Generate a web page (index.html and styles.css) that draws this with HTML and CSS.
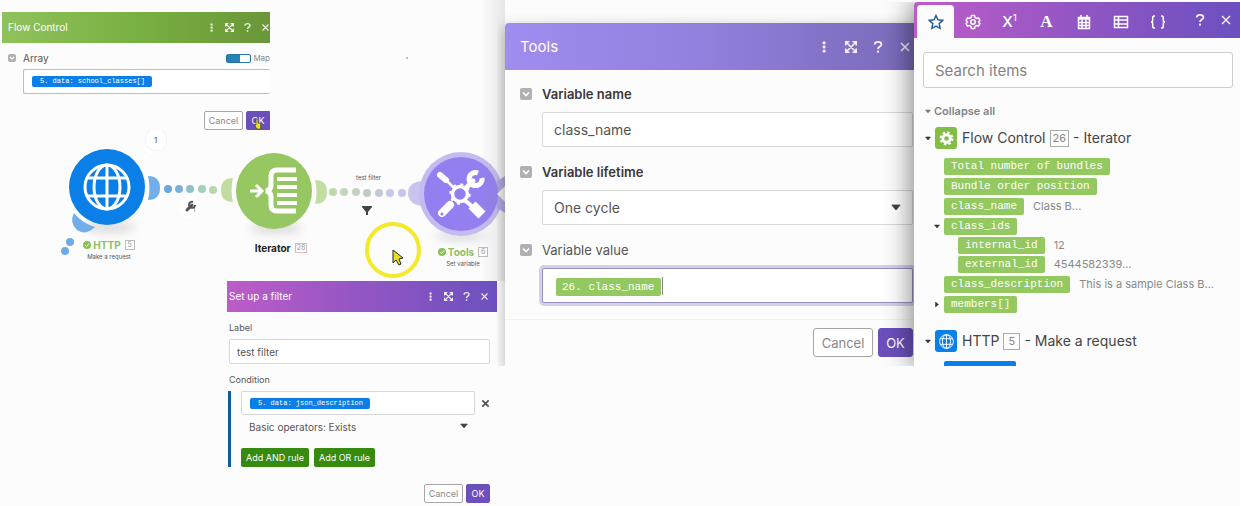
FILE: index.html
```html
<!DOCTYPE html>
<html lang="en">
<head>
<meta charset="utf-8">
<title>Scenario editor</title>
<link rel="stylesheet" href="styles.css">
</head>
<body>
<svg class="defs" aria-hidden="true">
  <symbol id="dots" viewBox="0 0 12 12"><g fill="currentColor"><rect x="4.7" y="0.5" width="2.8" height="2.8" rx=".8"/><rect x="4.7" y="4.6" width="2.8" height="2.8" rx=".8"/><rect x="4.7" y="8.7" width="2.8" height="2.8" rx=".8"/></g></symbol>
  <symbol id="expand" viewBox="0 0 12 12"><path d="M.8 4.500V.8h3.700M7.500.8h3.700v3.700M11.200 7.500v3.700H7.500M4.500 11.200H.8V7.500M1.500 1.500l9 9M10.500 1.500l-9 9" fill="none" stroke="currentColor" stroke-width="1.600"/></symbol>
  <symbol id="help" viewBox="0 0 12 12"><path d="M2.600 3.500C2.800 1.600 4.300.900 6 .900c1.900 0 3.400 1 3.400 2.500C9.400 5.600 6 5.500 6 8" fill="none" stroke="currentColor" stroke-width="1.800"/><rect x="5" y="9.600" width="2" height="2" fill="currentColor"/></symbol>
  <symbol id="close" viewBox="0 0 12 12"><path d="M2 2l8 8M10 2l-8 8" fill="none" stroke="currentColor" stroke-width="1.500"/></symbol>
  <symbol id="chev" viewBox="0 0 12 12"><path d="M3 4.500l3 3 3-3" fill="none" stroke="#fff" stroke-width="1.600"/></symbol>
  <symbol id="caret" viewBox="0 0 12 8"><path d="M1 1h10L6 7z" fill="currentColor" stroke="currentColor" stroke-linejoin="round"/></symbol>
  <symbol id="globe" viewBox="0 0 48 48"><g fill="none" stroke="#fff" stroke-width="3"><circle cx="24" cy="24" r="22"/><ellipse cx="24" cy="24" rx="13" ry="22"/><path d="M24 2v44M5 15h38M5 33h38"/></g></symbol>
</svg>

<main class="board">
  <section class="flow" aria-label="Scenario">
    <svg class="flow-art" width="505" height="281" viewBox="0 0 505 281" aria-hidden="true">
      <defs>
        <linearGradient id="shade" x1="0" x2="1"><stop offset="0" stop-color="#777" stop-opacity="0"/><stop offset="1" stop-color="#777" stop-opacity=".16"/></linearGradient>
        <filter id="soft" x="-30%" y="-100%" width="160%" height="300%"><feGaussianBlur stdDeviation="5"/></filter>
      </defs>
      <g fill="#999" opacity=".32" filter="url(#soft)"><ellipse cx="109" cy="227" rx="26" ry="6"/><ellipse cx="276" cy="228" rx="26" ry="6"/><ellipse cx="461" cy="236" rx="26" ry="5"/></g>
      <path d="M74 213q-5 10 3 17 9 6 18-3-13-4-21-14z" fill="#72aeea"/>
      <g fill="#6fabe4"><circle cx="70" cy="242" r="4"/><circle cx="65" cy="251" r="4"/></g>
      <path d="M148 176q12 0 12 12t-12 12q3-12 0-24z" fill="#72aeea"/>
      <g><circle cx="168" cy="189" r="4" fill="#69a8dd"/><circle cx="179" cy="189" r="4" fill="#7cb0da"/><circle cx="190" cy="189" r="4" fill="#8fc1cb"/><circle cx="202" cy="189" r="4" fill="#a4cfbd"/><circle cx="213" cy="190" r="4" fill="#b5d8ad"/></g>
      <path d="M233 178q-12 0-12 12t12 12q-3-12 0-24z" fill="#c1dda2"/>
      <path d="M315 180q12 0 12 12t-12 12q3-12 0-24z" fill="#c1dda2"/>
      <g><circle cx="333" cy="192" r="4" fill="#bddaa9"/><circle cx="344" cy="192" r="4" fill="#c1d8ba"/><circle cx="356" cy="192" r="4" fill="#c2d2c3"/><circle cx="367" cy="193" r="4" fill="#c0cbc5"/><circle cx="379" cy="193" r="4" fill="#c1cbd7"/><circle cx="390" cy="193" r="4" fill="#c3c9e6"/><circle cx="402" cy="193" r="4" fill="#c6c6eb"/></g>
      <path d="M424 181c-12 0-16 6-16 12s4 13 16 13z" fill="#c9c4ef"/>
      <circle cx="107" cy="187" r="38" fill="#0b7fe8"/>
      <use href="#globe" x="83" y="163" width="48" height="48"/>
      <circle cx="274" cy="191" r="38" fill="#97c763"/>
      <g fill="none" stroke="#fff"><path d="M250 191h10M256 185l6 6-6 6" stroke-width="3"/><path d="M296 170h-19q-6 0-6 6v9q0 5-5 6 5 1 5 6v8q0 6 6 6h19" stroke-width="5"/><path d="M277 179h20M277 187h20M277 195h20M277 203h20" stroke-width="4"/></g>
      <circle cx="461" cy="194" r="42" fill="#c4bbf1"/>
      <path d="M496 182l9-6v37l-9-6z" fill="#b6a9ef"/>
      <circle cx="461" cy="194" r="37" fill="#957ff0"/>
      <path d="M497 194l8-8v16z" fill="#fff"/>
      <g stroke="#fff" fill="none" stroke-linecap="round">
        <circle cx="460" cy="194" r="7.500" stroke-width="3.500"/><circle cx="460" cy="194" r="9.800" stroke-width="1.800" stroke-dasharray="3 4.700" stroke-linecap="butt"/>
        <path d="M440 175l6 5" stroke-width="6"/><path d="M446 180l7 7" stroke-width="2.500"/>
        <path d="M442 213l8-8" stroke-width="8"/><path d="M472 205l10 10" stroke-width="10" stroke-linecap="butt"/><path d="M467 202l8 7" stroke-width="4"/>
        <path d="M467 187l6-6" stroke-width="5"/><path d="M478 173a6.500 6.500 0 1 0 4 5" stroke-width="5" stroke-linecap="butt"/>
      </g>
      <circle cx="442" cy="214" r="1.500" fill="#957ff0"/>
      <path d="M147 148q-1 7-6 13 8-4 15-9z" fill="#fff"/><circle cx="156" cy="140" r="11" fill="#fff" stroke="#f3f3f3"/>
      <circle cx="190" cy="207" r="11" fill="#fff"/>
      <path d="M187 210l5-5" stroke="#555" stroke-width="3" stroke-linecap="round"/><path d="M193 202a3 3 0 1 0 2 3" fill="none" stroke="#555" stroke-width="2"/>
      <path d="M362 206h10v1l-4 5v3h-2v-3l-4-5z" fill="#444"/>
      <rect x="480" width="25" height="281" fill="url(#shade)"/>
      <circle cx="407" cy="58" r="1" fill="#aaa"/>
      <circle cx="393" cy="250" r="26" fill="none" stroke="#f3ea2b" stroke-width="4"/>
      <path d="M393 250v13l3-3 3 5 2-1-2-5 4-1z" fill="#e6df20" stroke="#222"/>
    </svg>
    <span class="tag count-one">1</span>
    <span class="tag wrench-one">1</span>
    <span class="tag link-name">test filter</span>
    <div class="node node-http"><strong><svg viewBox="0 0 10 10"><circle cx="5" cy="5" r="5" fill="#8cc152"/><path d="M2.500 5l2 2 3-4" fill="none" stroke="#fff"/></svg>HTTP <i>5</i></strong><span>Make a request</span></div>
    <div class="node node-iterator"><strong>Iterator <i>28</i></strong></div>
    <div class="node node-tools"><strong><svg viewBox="0 0 10 10"><circle cx="5" cy="5" r="5" fill="#8cc152"/><path d="M2.500 5l2 2 3-4" fill="none" stroke="#fff"/></svg>Tools <i>6</i></strong><span>Set variable</span></div>
  </section>

  <section class="panel small control">
    <header class="bar green"><h2>Flow Control</h2><div class="acts"><button aria-label="More"><svg><use href="#dots"/></svg></button><button aria-label="Expand"><svg><use href="#expand"/></svg></button><button aria-label="Help"><svg><use href="#help"/></svg></button><button aria-label="Close"><svg><use href="#close"/></svg></button></div></header>
    <div class="control-body">
      <div class="row"><button class="fold" aria-label="Toggle array"><svg><use href="#chev"/></svg></button><span id="array">Array</span><label class="switch"><input type="checkbox" checked>Map</label></div>
      <div class="field" role="textbox" tabindex="0" aria-labelledby="array"><span class="pill blue">5. data: school_classes[]</span></div>
      <div class="foot"><button class="btn">Cancel</button><button class="btn ok">OK</button></div>
    </div>
    <svg class="hand" viewBox="0 0 8 12" aria-hidden="true"><path d="M2 1v6L.7 7l2 4h4V5.500L4 5V1z" fill="#e9e221" stroke="#333" stroke-width=".6"/></svg>
  </section>

  <section class="panel small filter">
    <header class="bar violet"><h2>Set up a filter</h2><div class="acts"><button aria-label="More"><svg><use href="#dots"/></svg></button><button aria-label="Expand"><svg><use href="#expand"/></svg></button><button aria-label="Help"><svg><use href="#help"/></svg></button><button aria-label="Close"><svg><use href="#close"/></svg></button></div></header>
    <div class="filter-body">
      <label for="flabel">Label</label>
      <input id="flabel" class="field" type="text" value="test filter">
      <span class="cond-title" id="cond">Condition</span>
      <div class="cond">
        <div class="cond-row"><div class="field" role="textbox" tabindex="0" aria-labelledby="cond"><span class="pill blue">5. data: json_description</span></div><button class="remove" aria-label="Remove"><svg viewBox="0 0 10 10"><path d="M1.500 1.500l7 7M8.500 1.500l-7 7"/></svg></button></div>
        <div class="pick"><select aria-label="Operator"><option>Basic operators: Exists</option></select><svg class="caret"><use href="#caret"/></svg></div>
        <div class="rules"><button class="rule">Add AND rule</button><button class="rule">Add OR rule</button></div>
      </div>
      <div class="foot"><button class="btn">Cancel</button><button class="btn ok">OK</button></div>
    </div>
  </section>

  <div class="stage">
    <section class="panel tools">
      <header class="bar lilac"><h2>Tools</h2><div class="acts"><button aria-label="More"><svg><use href="#dots"/></svg></button><button aria-label="Expand"><svg><use href="#expand"/></svg></button><button aria-label="Help"><svg><use href="#help"/></svg></button><button aria-label="Close"><svg><use href="#close"/></svg></button></div></header>
      <div class="tools-body">
        <div class="row"><button class="fold" aria-label="Toggle name"><svg><use href="#chev"/></svg></button><label class="strong" for="vname">Variable name</label></div>
        <input id="vname" class="field" type="text" value="class_name">
        <div class="row"><button class="fold" aria-label="Toggle lifetime"><svg><use href="#chev"/></svg></button><label class="strong" for="vlife">Variable lifetime</label></div>
        <div class="pick"><select id="vlife" class="field"><option>One cycle</option></select><svg class="caret"><use href="#caret"/></svg></div>
        <div class="row"><button class="fold" aria-label="Toggle value"><svg><use href="#chev"/></svg></button><span id="vvalue">Variable value</span></div>
        <div class="field active" role="textbox" tabindex="0" aria-labelledby="vvalue"><span class="pill green">26. class_name</span><span class="beam"></span></div>
        <div class="foot"><button class="btn">Cancel</button><button class="btn ok">OK</button></div>
      </div>
    </section>
  </div>

  <aside class="panel items">
    <header class="bar violet tabs">
      <button class="tab current" aria-label="Favourites"><svg viewBox="0 0 16 16"><path d="M8 1.500l2 4.300 4.700.600-3.500 3.200.900 4.700L8 12l-4.100 2.300.900-4.700L1.300 6.400 6 5.800z"/></svg></button>
      <button class="tab" aria-label="General"><svg viewBox="0 0 16 16"><path d="M6.500 1.500h3l.5 2 1.500.9 2-.5 1.400 2.500L13.500 8l1.400 1.600-1.400 2.500-2-.5-1.500.9-.5 2h-3l-.5-2-1.500-.9-2 .5-1.400-2.500L2.500 8 1.100 6.400l1.400-2.500 2 .5L6 3.500z"/><circle cx="8" cy="8" r="2.200"/></svg></button>
      <button class="tab math" aria-label="Math">X<sup>1</sup></button>
      <button class="tab letter" aria-label="Text">A</button>
      <button class="tab" aria-label="Dates"><svg viewBox="0 0 16 16"><path d="M2.500 3.500h11v11h-11zM2 5h12M5 1v3M11 1v3M2.500 8.500h11M2.500 11.500h11M6 6v8M10 6v8"/></svg></button>
      <button class="tab" aria-label="Lists"><svg viewBox="0 0 16 16"><path d="M1.500 2.500h13v11h-13zM1.500 6h13M1.500 10h13M5.500 2.500v11"/></svg></button>
      <button class="tab" aria-label="Variables"><svg viewBox="0 0 16 16"><path d="M5 2H4Q2.700 2 2.700 4v2Q2.700 8 1 8q1.700 0 1.700 2v2Q2.700 14 4 14h1M11 2h1q1.300 0 1.300 2v2q0 2 1.700 2-1.700 0-1.700 2v2q0 2-1.300 2h-1"/></svg></button>
      <div class="acts"><button aria-label="Help"><svg><use href="#help"/></svg></button><button aria-label="Close"><svg><use href="#close"/></svg></button></div>
    </header>
    <div class="items-body">
      <input class="search" type="search" placeholder="Search items" aria-label="Search items">
      <button class="collapse"><svg class="tri"><use href="#caret"/></svg>Collapse all</button>
      <h3><svg class="tri"><use href="#caret"/></svg><span class="app app-green"><svg viewBox="0 0 14 14"><circle cx="7" cy="7" r="3.500" fill="none" stroke="#fff" stroke-width="2.600"/><circle cx="7" cy="7" r="5.500" fill="none" stroke="#fff" stroke-width="2" stroke-dasharray="2.200 2.120"/></svg></span>Flow Control <i>26</i> - Iterator</h3>
      <ul class="tree">
        <li><span class="pill green">Total number of bundles</span></li>
        <li><span class="pill green">Bundle order position</span></li>
        <li><span class="pill green">class_name</span><span class="sample">Class B...</span></li>
        <li><svg class="tri node-tri"><use href="#caret"/></svg><span class="pill green">class_ids</span>
          <ul><li><span class="pill green">internal_id</span><span class="sample">12</span></li><li><span class="pill green">external_id</span><span class="sample">4544582339...</span></li></ul></li>
        <li><span class="pill green">class_description</span><span class="sample">This is a sample Class B...</span></li>
        <li><svg class="tri node-tri shut"><use href="#caret"/></svg><span class="pill green">members[]</span></li>
      </ul>
      <h3><svg class="tri"><use href="#caret"/></svg><span class="app app-blue"><svg><use href="#globe"/></svg></span>HTTP <i>5</i> - Make a request</h3>
      <ul class="tree"><li><span class="pill blue next"></span></li></ul>
    </div>
  </aside>
</main>
</body>
</html>
```
FILE: styles.css
```css
* { box-sizing: border-box; }
body { margin: 0; background: #fdfcfd; color: #555; font-family: Inter, "Liberation Sans", sans-serif; }
button, input, select { font: inherit; color: inherit; margin: 0; }
button { border: 0; padding: 0; background: none; display: inline-flex; align-items: center; justify-content: center; }
h2, h3, ul { margin: 0; padding: 0; font-weight: 400; list-style: none; }
i { font-style: normal; }
.defs { position: absolute; width: 0; height: 0; }
.board { position: relative; min-height: 100vh; overflow: hidden; }

/* Scenario canvas */
.flow { position: absolute; left: 0; top: 0; }
.flow-art { display: block; }
.tag { position: absolute; font-size: 6px; line-height: 8px; white-space: nowrap; }
.count-one { left: 154px; top: 136px; font-size: 8px; }
.wrench-one { left: 193px; top: 206px; }
.link-name { left: 356px; top: 174px; }
.node { position: absolute; display: flex; flex-direction: column; align-items: center; gap: 2px; width: 80px; font-size: 6px; line-height: 8px; white-space: nowrap; color: #555; }
.node strong { display: flex; align-items: center; gap: 2px; font-size: 10px; line-height: 12px; color: #8fbf5f; }
.node strong svg { width: 8px; height: 8px; }
.node i { margin-left: 2px; min-width: 10px; padding: 0 1px; border: 1px solid #bbb; font-size: 7px; font-weight: 400; line-height: 8px; text-align: center; color: #999; }
.node-http { left: 69px; top: 239px; }
.node-iterator { left: 241px; top: 242px; }
.node-iterator strong { font-size: 10px; color: #222; }
.node-iterator i { border-color: #dbb; }
.node-tools { left: 423px; top: 246px; }

/* Panels */
.panel { position: absolute; background: #fdfcfd; }
.small { font-size: 10px; line-height: 12px; }
.bar { display: flex; align-items: center; justify-content: space-between; color: #fff; }
.bar.green { background: linear-gradient(90deg, #90c25c, #79b043 50%, #6a9638); }
.bar.violet { background: linear-gradient(90deg, #bd5cc8, #9256c4 50%, #6c50bf); }
.bar.lilac { background: linear-gradient(90deg, #a18cf0, #937fdc 50%, #7b69b8); }
.small .bar { height: 31px; padding-bottom: 1px; }
.small .bar h2 { font-size: 10px; }
.acts { display: flex; align-items: center; }
.small .acts { gap: 9px; }
.small .acts svg { width: 9px; height: 9px; }
.field { width: 100%; border: 1px solid #d8d8d8; border-radius: 2px; background: #fff; outline: 0; display: flex; align-items: center; }
.pill { display: inline-block; border-radius: 2px; color: #fff; font-family: "Liberation Mono", monospace; white-space: pre; }
.pill.green { background: #94c861; }
.pill.blue { background: #0b7fe8; }
.small .pill { padding: 0 7px 0 8px; font-size: 7px; line-height: 11px; }
.row { display: flex; align-items: center; }
.fold { border-radius: 2px; background: #b2b0b2; }
.foot { display: flex; justify-content: flex-end; }
.btn { border: 1px solid #a8a5a8; border-radius: 2px; background: #fff; color: #888; }
.btn.ok { border-color: #6b50bd; background: #6b50bd; color: #fff; }
.small .foot { gap: 3px; }
.small .btn { width: 39px; height: 19px; font-size: 9px; }
.small .btn.ok { width: 24px; }
.pick { position: relative; }
.pick select { appearance: none; }
.caret { position: absolute; right: 12px; top: 50%; width: 10px; height: 7px; margin-top: -4px; color: #444; pointer-events: none; }

.control { left: 2px; top: 12px; width: 268px; overflow: hidden; }
.control .bar { padding: 0 0 1px 6px; }
.control .fold, .control .fold svg { width: 8px; height: 8px; }
.control-body { padding: 9px 0 0 6px; }
.control .row { gap: 7px; }
.switch { display: flex; align-items: center; gap: 2px; margin-left: auto; font-size: 8px; color: #888; }
.switch input { appearance: none; width: 25px; height: 9px; border: 1px solid #2275a8; border-radius: 2px; background: linear-gradient(90deg, #2582b9 55%, #fff 55%); }
.control .field { width: auto; height: 25px; margin: 5px 0 17px 15px; padding-left: 8px; border-right: 0; }
.control .field { border-color: #bdbcc8; }
.control .btn.ok { width: 24px; border-radius: 2px 0 0 2px; }
.hand { position: absolute; right: 8px; bottom: 0; width: 8px; height: 12px; }

.filter { left: 227px; top: 281px; width: 270px; }
.filter .bar { padding: 0 8px 1px 2px; }
.filter-body { display: flex; flex-direction: column; padding: 10px 7px 2px 2px; }
.filter-body > label, .cond-title { font-size: 9px; }
.filter-body > .field { height: 25px; margin: 5px 0 10px; padding: 0 7px; }
.cond-title { margin-bottom: 5px; }
.cond { display: flex; flex-direction: column; margin-left: -1px; padding-left: 10px; border-left: 3px solid #0a5fa0; }
.cond-row { display: flex; align-items: center; }
.cond-row .field { flex: 1; height: 24px; padding-left: 8px; }
.remove { width: 10px; margin-left: 5px; }
.remove svg { width: 9px; height: 9px; fill: none; stroke: #555; stroke-width: 2; }
.cond .pick { margin-right: 10px; }
.cond select { width: 100%; height: 24px; border: 0; padding: 0 8px; background: none; }
.cond .caret { width: 8px; height: 6px; }
.rules { display: flex; gap: 5px; margin-top: 9px; }
.rule { height: 19px; padding: 0 5px; border-radius: 2px; background: #368a0d; color: #fff; font-size: 9px; }
.filter .foot { margin-top: 17px; }

/* Variable panel */
.stage { position: absolute; left: 497px; top: 0; width: 417px; height: 366px; overflow: hidden; pointer-events: none; }
.tools { left: 8px; top: 23px; right: 0; padding-bottom: 9px; border-radius: 4px 0 0 0; box-shadow: 0 4px 14px rgba(0, 0, 0, .3); pointer-events: auto; font-size: 14px; line-height: 18px; }
.tools .bar { height: 47px; padding: 0 3px 0 15px; border-radius: 4px 0 0 0; }
.tools .bar h2 { font-size: 15px; }
.tools .acts { gap: 15px; }
.acts svg { width: 12px; height: 12px; opacity: .9; }
.tools-body { padding: 15px 1px 0 15px; font-size: 13px; }
.tools .row { gap: 10px; }
.tools .fold, .tools .fold svg { width: 12px; height: 12px; }
.strong { font-weight: 600; color: #3a383a; }
.tools .field { height: 35px; padding: 0 11px; font-size: 14px; }
.tools-body > .field, .tools-body > .pick { width: auto; margin: 9px 0 16px 22px; }
.tools-body > input.field { width: calc(100% - 22px); }
.tools-body > .pick select { width: 100%; }
.tools-body > .active { padding: 3px 13px 0; border-color: #9690c0; box-shadow: 0 0 0 3px #d3d1ea; }
.tools .pill { padding: 0 7px 0 6px; font-size: 11px; line-height: 18px; }
.beam { width: 1px; height: 18px; margin: 0 0 3px 1px; background: #888; }
.tools .foot { gap: 5px; margin-left: -15px; margin-right: -1px; padding: 8px 1px 0 0; border-top: 1px solid #f3f3f3; }
.tools .btn { width: 60px; height: 29px; border-radius: 3px; font-size: 13px; }
.tools .btn.ok { width: 35px; }

/* Item picker */
.items { left: 914px; right: 0; top: 2px; height: 364px; color: #444; box-shadow: -4px 0 26px rgba(0, 0, 0, .45); clip-path: inset(0 0 0 -40px); border-radius: 4px 0 0 0; }
.tabs { height: 36px; padding: 3px 8px 0 3px; justify-content: flex-start; border-radius: 4px 0 0 0; }
.tab { width: 37px; height: 33px; border-radius: 4px 4px 0 0; }
.tab svg { width: 16px; height: 16px; fill: none; stroke: currentColor; stroke-width: 1.5; }
.tab.current { background: #fdfcfd; color: #2a6396; }
.math { align-items: center; font-size: 15px; font-weight: 500; }
.math sup { font-size: 9px; line-height: 8px; margin-bottom: 8px; }
.letter { font-family: "Liberation Serif", serif; font-size: 17px; font-weight: 700; }
.tabs .acts { margin-left: auto; gap: 14px; padding-bottom: 3px; }
.items-body { padding: 14px 7px 0 9px; }
.search { display: block; width: 100%; height: 36px; padding: 0 11px; border: 1px solid #cfcccf; border-radius: 3px; background: #fff; font-size: 15px; outline: 0; }
.search::placeholder { color: #858285; opacity: 1; }
.collapse { gap: 3px; margin: 15px 0 8px 2px; font-size: 11px; font-weight: 600; line-height: 16px; color: #858285; }
.tri { width: 6px; height: 5px; color: #333; flex: none; }
.collapse .tri { color: #777; }
.items h3 { display: flex; align-items: center; gap: 4px; margin: 0 0 9px 2px; font-size: 14px; line-height: 22px; white-space: nowrap; }
.items h3 i { padding: 0 2px; min-width: 17px; border: 1px solid #aaa; font-size: 11px; line-height: 15px; text-align: center; color: #888; }
.app { display: grid; place-items: center; width: 22px; height: 22px; border-radius: 3px; margin-right: 1px; }
.app svg { width: 15px; height: 15px; }
.app-green { background: #82bd48; }
.app-blue { background: #0b7fe8; }
.tree { display: flex; flex-direction: column; gap: 3px; margin-left: 21px; font-size: 11px; line-height: 17px; color: #888; }
.tree li { position: relative; white-space: nowrap; }
.items .pill { padding: 0 7px; font-size: 11px; line-height: 17px; vertical-align: top; }
.tree ul { display: flex; flex-direction: column; gap: 2px; margin: 2px 0 0 14px; }
.sample { margin-left: 9px; }
.node-tri { position: absolute; left: -10px; top: 6px; }
.shut { transform: rotate(-90deg); }
.items .tree + h3 { margin-top: 17px; }
.pill.next { width: 72px; height: 17px; }
```
